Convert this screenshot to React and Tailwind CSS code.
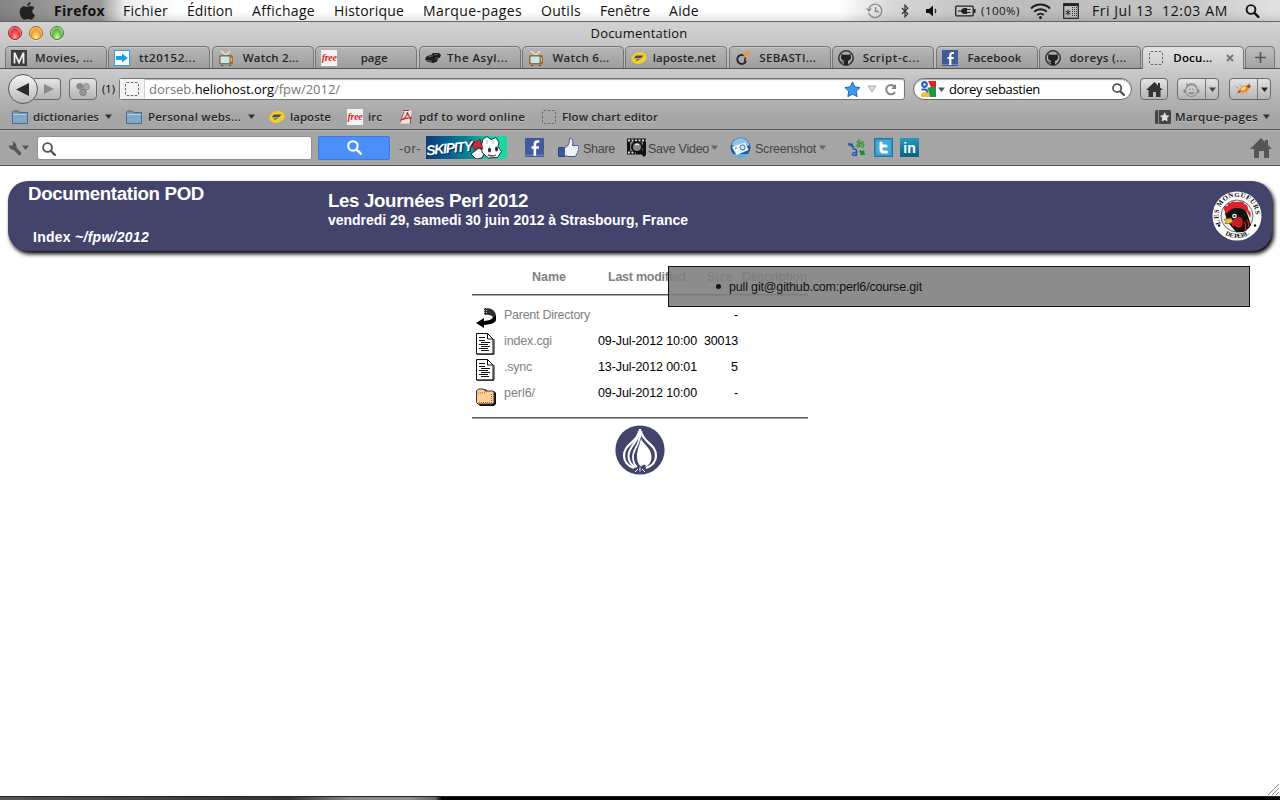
import React, { useLayoutEffect, useRef, useState } from "react";

/* One-line label whose letter spacing adapts to the width of its box. */
function Fit({ children, className = "" }) {
  const outer = useRef(null);
  const inner = useRef(null);
  const [spacing, setSpacing] = useState(0);
  useLayoutEffect(() => {
    const count = inner.current.textContent.length;
    const natural = inner.current.getBoundingClientRect().width;
    setSpacing((outer.current.clientWidth - natural) / count);
  }, []);
  return (
    <span ref={outer} className={"block shrink-0 whitespace-nowrap " + className}>
      <span ref={inner} style={{ letterSpacing: spacing + "px" }}>
        {children}
      </span>
    </span>
  );
}

function Svg({ className = "", box = "0 0 16 16", children }) {
  return (
    <svg className={"block shrink-0 " + className} viewBox={box} fill="none">
      {children}
    </svg>
  );
}

const Arrow = ({ className = "" }) => (
  <Svg className={"h-[5px] w-[7px] " + className} box="0 0 7 5">
    <path d="M0 .5h7L3.5 5z" fill="currentColor" />
  </Svg>
);

const Magnifier = ({ className = "" }) => (
  <Svg className={className} box="0 0 14 14">
    <circle cx="5.5" cy="5.5" r="4.4" stroke="currentColor" strokeWidth="1.9" />
    <path d="M9 9l3.800 3.800" stroke="currentColor" strokeWidth="2.4" strokeLinecap="round" />
  </Svg>
);

const Blank = ({ className = "" }) => (
  <Svg className={"h-4 w-4 " + className}>
    <rect x="1.5" y="1.5" width="13" height="13" rx="1.5" stroke="#666" strokeDasharray="2.4 1.6" />
  </Svg>
);

const MIcon = () => (
  <Svg className="h-4 w-4">
    <rect width="16" height="16" fill="#3c3c3c" />
    <path d="M3.500 13.500v-11M12.500 13.500v-11M3.500 2.500l4.500 10 4.500-10" stroke="#eee" strokeWidth="1.800" />
  </Svg>
);
const BlueArrow = () => (
  <Svg className="h-4 w-4">
    <rect x=".5" y=".5" width="15" height="15" fill="#fff" stroke="#2b9fdf" />
    <path d="M2 6h6V3.500L14 8l-6 4.500V10H2z" fill="#1f9be0" />
  </Svg>
);
const Tv = () => (
  <Svg className="h-4 w-4">
    <path d="M3 1l5 4 4-4" stroke="#f1e6cc" strokeWidth="1.2" />
    <rect x="1" y="5" width="14" height="9.500" rx="1.500" fill="#a56a32" />
    <rect x="2.500" y="6.500" width="9" height="6.500" rx="1" fill="#b9ecf7" />
    <path d="M13.300 7.500v4" stroke="#e8c98c" />
    <path d="M3 15.500h2M11 15.500h2" stroke="#68401d" />
  </Svg>
);
const Free = () => (
  <span className="flex h-4 w-4 shrink-0 items-center justify-center overflow-hidden bg-[#f3f3f3] font-['Liberation_Serif',serif] text-[10px] italic leading-none tracking-[-0.3px] text-[#d22]">
    free
  </span>
);
const Car = () => (
  <Svg className="h-4 w-4">
    <path d="M0 9l2-3 4-1 2-2 6 0 2 2-1 2.500-2 1-1 3-4 1.500-6-1.500z" fill="#1d1d1d" />
    <path d="M3 7l5-1.300M9 5l4-.8M2 10.500l5 .8M10 9l3-1.500" stroke="#777" strokeWidth=".8" />
  </Svg>
);
const Poste = () => (
  <Svg className="h-4 w-4">
    <ellipse cx="8" cy="8" rx="7.800" ry="5.800" transform="rotate(-12 8 8)" fill="#f6cd24" />
    <path d="M5 5.500h7.500L10 8.200H2.800zM5.500 9.200h4L5 11z" fill="#30517c" />
  </Svg>
);
const Swirl = () => (
  <Svg className="h-4 w-4">
    <path d="M9 5.500A4.500 4.500 0 1 0 11 11" stroke="#2a2a2a" strokeWidth="2" />
    <path d="M9.500 11.500l1-4" stroke="#2a2a2a" strokeWidth="1.500" />
    <path d="M8 4c2-.5 3-3 4-4l3 2c-1 3-3 4.500-5.500 5z" fill="#f0963a" />
  </Svg>
);
const Github = () => (
  <Svg className="h-4 w-4">
    <circle cx="8" cy="8" r="7.200" fill="#aaa" stroke="#333" strokeWidth="1.500" />
    <path d="M3.500 4l2 .8h5l2-.8.5 3.500c0 2-1.500 3-3 3.300V15H6v-4.200C4.500 10.500 3 9.500 3 7.500z" fill="#222" />
    <path d="M3.500 11.500l2.500 1.300" stroke="#333" />
  </Svg>
);
const Fb = ({ className = "h-4 w-4" }) => (
  <Svg className={className}>
    <rect width="16" height="16" fill="#3f5b9c" />
    <path d="M0 14.500h16" stroke="#6d86bd" />
    <path d="M12 3h-1.500C9 3 8.300 4 8.300 5.500V15M5.500 8h6.200" stroke="#fff" strokeWidth="2.200" />
  </Svg>
);
const Folder = () => (
  <Svg className="h-4 w-4">
    <path d="M.5 3.500l1-1.500h5l1 1.500h8v11H.5z" fill="#7399bb" stroke="#466d92" />
    <path d="M1 6h14v8H1z" fill="#83a9c9" />
    <path d="M1 5.500h14" stroke="#b4cde1" />
  </Svg>
);
const Pdf = () => (
  <Svg className="h-4 w-4">
    <path d="M5 1.500h9L11.500 14.500H2L5 1.500z" fill="#eee3e1" />
    <path d="M2 13.500L6 2.500M5 1.500h6M12.500 9v5.500" stroke="#a8433f" />
    <path d="M3 11c3-1 6-4 6.500-8 .5 3 2 5.500 4.500 6-3-.5-7 .5-11 2z" stroke="#b9322d" strokeWidth="1.200" />
  </Svg>
);

const tabs = [
  [MIcon, "Movies, ...", "w-[58px]"],
  [BlueArrow, "tt20152...", "w-[57px]"],
  [Tv, "Watch 2...", "w-[56px]"],
  [Free, "page", "w-[27px]"],
  [Car, "The Asyl...", "w-[61px]"],
  [Tv, "Watch 6...", "w-[57px]"],
  [Poste, "laposte.net", "w-[63px]"],
  [Swirl, "SEBASTI...", "w-[57px]"],
  [Github, "Script-c...", "w-[57px]"],
  [Fb, "Facebook", "w-[54px]"],
  [Github, "doreys (...", "w-[57px]"],
];

const menus = [
  ["Fichier", "w-[45px]"],
  ["Édition", "w-[46px]"],
  ["Affichage", "w-[63px]"],
  ["Historique", "w-[70px]"],
  ["Marque-pages", "w-[99px]"],
  ["Outils", "w-[40px]"],
  ["Fenêtre", "w-[50px]"],
  ["Aide", "w-[30px]"],
];

function MenuBar() {
  return (
    <div className="flex h-[21px] items-center bg-[linear-gradient(90deg,#848484_0,#969696_50px,#999_100px,#eee_125px,#fff_180px,#fff_840px,#d8d8d8_890px,#bcbcbc_1000px,#c4c4c4_1180px,#e2e2e2_1280px)] text-[14px] leading-[20px] text-[#111] shadow-[inset_0_-8px_8px_-5px_rgba(0,0,0,0.14)]">
      <Svg className="ml-[19px] h-[18px] w-[17px]" box="0 0 17 18">
        <path d="M11.500 0c.2 2-1.500 4-3.300 4C8 2.200 9.700.4 11.500 0zM8.300 5c.8 0 1.800-1 3.600-.9 1.500.1 2.700.7 3.500 1.900-3 1.700-2.500 5.700.6 7-.7 2-2.200 4.700-3.900 4.700-1.200 0-1.700-.7-3.200-.7s-2 .7-3.200.7C3.200 17.700.7 13.500.7 10c0-3.800 2.400-5.800 4.500-5.800C6.500 4.200 7.500 5 8.300 5z" fill="#222" />
      </Svg>
      <Fit className="ml-[18px] mr-[18px] w-[51px] font-bold">Firefox</Fit>
      <div className="flex gap-[19px]">
        {menus.map(([t, w]) => (
          <Fit key={t} className={w}>{t}</Fit>
        ))}
      </div>
      <div className="ml-auto flex items-center pr-[20px]">
        <Svg className="h-[16px] w-[18px] text-[#888]" box="0 0 18 16">
          <path d="M3 5a6.700 6.700 0 1 1-.3 5M9.500 4v4.500h3.500" stroke="currentColor" strokeWidth="1.400" />
          <path d="M0 5.500h6L3 9z" fill="currentColor" />
        </Svg>
        <Svg className="ml-[17px] h-[14px] w-[8px]" box="0 0 8 14">
          <path d="M.8 4l6 5.800L4 12.800V1.200l2.800 3L.8 10" stroke="#333" strokeWidth="1.200" />
        </Svg>
        <Svg className="ml-[17px] h-[12px] w-[12px]" box="0 0 12 12">
          <path d="M0 4h3l4-3.500v11L3 8H0z" fill="#111" />
          <path d="M9 4q1.500 2 0 4" stroke="#222" strokeWidth="1.300" />
        </Svg>
        <Svg className="ml-[17px] h-[12px] w-[21px]" box="0 0 21 12">
          <rect x=".7" y="1.200" width="17.500" height="9.600" rx="1" stroke="#222" strokeWidth="1.300" />
          <path d="M19 4h1.500v4H19z" fill="#222" />
          <path d="M3 6h4M12 4.500h3.500M12 7.500h3.500" stroke="#222" strokeWidth="1.200" />
          <path d="M6 6c0-2 2-3 3.500-3H12v6H9.500C8 9 6 8 6 6z" fill="#222" />
        </Svg>
        <Fit className="ml-[5px] w-[39px] text-[11.500px]">(100%)</Fit>
        <Svg className="ml-[10px] h-[16px] w-[21px]" box="0 0 21 16">
          <path d="M1 5.500a13.500 13.500 0 0 1 19 0M4.200 8.800a9 9 0 0 1 12.600 0M7.300 12a4.700 4.700 0 0 1 6.400 0" stroke="#1c1c1c" strokeWidth="2" />
          <circle cx="10.500" cy="14.500" r="1.500" fill="#1c1c1c" />
        </Svg>
        <Svg className="ml-[12px] h-[16px] w-[16px]">
          <rect x=".7" y=".7" width="14.600" height="14.600" stroke="#222" strokeWidth="1.200" />
          <path d="M1 2h14" stroke="#222" strokeWidth="2" />
          <path d="M5 6.500v6M2.500 8l5 3M7.500 8l-5 3" stroke="#222" />
          <path d="M9.500 4v10M11.500 4v10M13.500 4v10" stroke="#333" strokeDasharray="1 1" />
        </Svg>
        <Fit className="ml-[13px] w-[61px]">Fri Jul 13</Fit>
        <Fit className="ml-[9px] w-[66px]">12:03 AM</Fit>
        <Magnifier className="ml-[17px] h-[14px] w-[15px]" />
      </div>
    </div>
  );
}

function TitleBar() {
  const light = "h-[14px] w-[14px] rounded-full border shadow-[0_1px_0_rgba(255,255,255,0.4)]";
  return (
    <div className="flex h-[24px] items-center rounded-t-[5px] px-[8px]">
      <div className="flex w-[60px] shrink-0 gap-[7px] pb-[2px]">
        <span className={light + " border-[#8e2b2b] bg-[radial-gradient(ellipse_at_50%_90%,#ff9a98_5%,#e8303c_55%,#f3b4b4_85%)]"} />
        <span className={light + " border-[#a5672a] bg-[radial-gradient(ellipse_at_50%_90%,#ffe883_5%,#f09a2c_55%,#f9dcb0_85%)]"} />
        <span className={light + " border-[#3f7f31] bg-[radial-gradient(ellipse_at_50%_90%,#cdf59a_5%,#5fb142_55%,#cde9bd_85%)]"} />
      </div>
      <div className="flex flex-1 justify-center pb-[2px] pr-[62px]">
        <Fit className="w-[97px] text-[13px] leading-[18px] text-[#111]">Documentation</Fit>
      </div>
    </div>
  );
}

function Tabs() {
  return (
    <div className="flex h-[23px] items-end border-b border-[#555] pl-[5px] text-[11.500px] font-[650] leading-[16px] text-[#262626]">
      {tabs.map(([Icon, label, w], i) => (
        <div key={i} className="mr-[1.400px] flex h-[22px] w-[102px] shrink-0 items-center rounded-t-[5px] border border-b-0 border-[#747474] bg-linear-to-b from-[#b6b6b6] to-[#9e9e9e] pl-[5px] pr-[4px] shadow-[inset_0_1px_0_#c6c6c6]">
          <Icon />
          <div className="-ml-px flex flex-1 justify-center">
            <Fit className={w}>{label}</Fit>
          </div>
        </div>
      ))}
      <div className="-mb-px flex h-[23px] w-[102px] shrink-0 items-center rounded-t-[5px] border border-b-0 border-[#777] bg-linear-to-b from-[#e2e2e2] to-[#cbcbcb] pl-[5px] text-black">
        <Blank />
        <Fit className="ml-[9px] w-[39px]">Docu...</Fit>
        <Svg className="ml-[14px] h-[8px] w-[8px]" box="0 0 8 8">
          <path d="M1 1l6 6M7 1L1 7" stroke="#777" strokeWidth="2" />
        </Svg>
      </div>
      <div className="ml-[1px] flex h-[22px] w-[30px] shrink-0 items-center justify-center rounded-t-[5px] border border-b-0 border-[#777] bg-linear-to-b from-[#bebebe] to-[#a3a3a3]">
        <Svg className="h-[11px] w-[11px]" box="0 0 11 11">
          <path d="M5.500 0v11M0 5.500h11" stroke="#555" strokeWidth="1.600" />
        </Svg>
      </div>
    </div>
  );
}

const button = "flex h-[22px] shrink-0 items-center justify-center rounded-[4px] border border-[#6a6a6a] bg-linear-to-b from-[#e4e4e4] to-[#b4b4b4]";

function NavBar() {
  return (
    <div className="flex h-[40px] items-center pl-[8px] text-black">
      <div className="z-10 flex h-[30px] w-[30px] shrink-0 items-center justify-center rounded-full border border-[#555] bg-linear-to-b from-[#f4f4f4] to-[#b9b9b9]">
        <Svg className="mr-[2px] h-[13px] w-[13px]" box="0 0 13 13">
          <path d="M13 0v13L0 6.500z" fill="#2b2b2b" />
        </Svg>
      </div>
      <div className={button + " -ml-[4px] w-[27px] rounded-l-none border-l-0 pl-[3px]"}>
        <Svg className="h-[10px] w-[10px]" box="0 0 10 10">
          <path d="M0 0v10l10-5z" fill="#8b8b8b" />
        </Svg>
      </div>
      <div className={button + " ml-[8px] w-[28px]"}>
        <Svg className="h-[15px] w-[16px]">
          <circle cx="4.500" cy="4.500" r="3.500" fill="#898989" />
          <circle cx="11.500" cy="5" r="3.300" fill="#aaa" stroke="#858585" />
          <circle cx="8" cy="11" r="3.500" fill="#999" stroke="#7c7c7c" />
        </Svg>
      </div>
      <Fit className="ml-[5px] w-[13px] text-[11px] leading-[16px]">(1)</Fit>
      <div className="ml-[4px] flex h-[22px] w-[786px] shrink-0 items-center rounded-[3px] border border-[#757575] bg-white shadow-[inset_0_1px_1px_#aaa]">
        <div className="flex h-full w-[25px] items-center border-r border-[#d0d0d0] bg-[#f3f3f3] pl-[4px]">
          <Blank />
        </div>
        <Fit className="ml-[4px] w-[191px] text-[13px] leading-[18px] text-[#777]">
          dorseb.<span className="text-black">heliohost.org</span>/fpw/2012/
        </Fit>
        <div className="ml-auto flex items-center pr-[7px]">
          <Svg className="h-[17px] w-[17px]" box="0 0 17 17">
            <path d="M8.500 1l2.300 4.900 5.200.7-3.800 3.700.9 5.300-4.600-2.500-4.600 2.500.9-5.300L1 6.600l5.200-.7z" fill="#3f9bf0" stroke="#1b60b0" />
          </Svg>
          <Svg className="ml-[6px] h-[8px] w-[10px]" box="0 0 10 8">
            <path d="M1 1h8L5 7z" fill="#ddd" stroke="#aaa" />
          </Svg>
          <Svg className="ml-[7px] h-[13px] w-[13px]" box="0 0 13 13">
            <path d="M10.500 3.500A4.700 4.700 0 1 0 11 9" stroke="#858585" strokeWidth="2" />
            <path d="M7 6h5V1z" fill="#858585" />
          </Svg>
        </div>
      </div>
      <div className="ml-[8px] flex h-[22px] w-[219px] shrink-0 items-center rounded-full border border-[#6b6b6b] bg-white pl-[6px] shadow-[inset_0_1px_1px_#aaa]">
        <Svg className="h-4 w-4">
          <path d="M0 0h16v16H0z" fill="#fff" />
          <path d="M8 0h8v6h-5z" fill="#e81f26" />
          <path d="M10 6h6v10h-6l-2-4z" fill="#19984b" />
          <circle cx="4.500" cy="3.500" r="2.300" stroke="#2458d8" strokeWidth="2.200" />
          <path d="M1 16v-3l3-2h5l1 5z" fill="#f4bf2a" />
          <path d="M1.500 8.500h4l2.500 2.500" stroke="#2458d8" strokeWidth="1.800" />
          <path d="M7.500 6.500h3v3h-3z" fill="#19984b" />
        </Svg>
        <Arrow className="ml-[2px] text-[#555]" />
        <Fit className="ml-[4px] w-[91px] text-[13px] leading-[18px]">dorey sebastien</Fit>
        <Magnifier className="ml-auto mr-[6px] h-[13px] w-[13px] text-[#555]" />
      </div>
      <div className={button + " ml-[8px] w-[28px]"}>
        <Svg className="h-[15px] w-[17px]" box="0 0 17 15">
          <path d="M8.500 0L12 3.500V1h2v4.500L17 8h-2.500v7H10v-5H7v5H2.500V8H0z" fill="#333" />
        </Svg>
      </div>
      <div className={button + " ml-[9px] w-[42px]"}>
        <Svg className="ml-[5px] h-[17px] w-[17px]">
          <circle cx="8" cy="9" r="5.500" fill="#ccc" stroke="#888" />
          <path d="M3 6c2-4 8-5 10 0M4.500 5L3 2M5.500 11q2.500 3 5 0zM6.500 7v2M9.500 7v2" stroke="#888" />
          <path d="M1.500 8v3M14.500 8v3" stroke="#888" strokeWidth="2" />
        </Svg>
        <span className="ml-auto flex h-full w-[13px] items-center justify-center border-l border-[#777]"><Arrow className="h-[4px] w-[6px] text-[#444]" /></span>
      </div>
      <div className={button + " ml-[10px] w-[42px]"}>
        <Svg className="ml-[5px] h-[17px] w-[17px]">
          <path d="M0 5l4 2M1 12l4-2M7 13l1-3M11 12l-1-3M14 2l-2 2M4 3l3 3" stroke="#b59a74" strokeWidth=".8" />
          <ellipse cx="9" cy="7.500" rx="5" ry="2.900" transform="rotate(-25 9 7.500)" fill="#ee8b20" />
          <ellipse cx="8" cy="7" rx="2.500" ry="1.300" transform="rotate(-25 8 7)" fill="#ffe292" />
          <circle cx="13" cy="5" r="1.600" fill="#ae3e18" />
          <circle cx="4" cy="10" r="1.300" fill="#b5552a" />
        </Svg>
        <span className="ml-auto flex h-full w-[13px] items-center justify-center border-l border-[#777]"><Arrow className="h-[4px] w-[6px] text-[#222]" /></span>
      </div>
    </div>
  );
}

function Bookmarks() {
  return (
    <div className="flex h-[21px] items-center border-b border-[#555] pb-[5px] pl-[12px] text-[11.500px] font-[650] leading-[16px] text-[#252525] [text-shadow:0_1px_0_rgba(255,255,255,0.3)]">
      <Folder />
      <Fit className="ml-[5px] w-[66px]">dictionaries</Fit>
      <Arrow className="ml-[6px] text-[#333]" />
      <div className="ml-[14px]"><Folder /></div>
      <Fit className="ml-[6px] w-[93px]">Personal webs...</Fit>
      <Arrow className="ml-[7px] text-[#333]" />
      <div className="ml-[14px]"><Poste /></div>
      <Fit className="ml-[5px] w-[41px]">laposte</Fit>
      <div className="ml-[16px]"><Free /></div>
      <Fit className="ml-[5px] w-[14px]">irc</Fit>
      <div className="ml-[16px]"><Pdf /></div>
      <Fit className="ml-[5px] w-[106px]">pdf to word online</Fit>
      <Blank className="ml-[16px]" />
      <Fit className="ml-[5px] w-[96px]">Flow chart editor</Fit>
      <Svg className="ml-auto h-[14px] w-[16px]" box="0 0 16 14">
        <rect width="16" height="14" rx="1.500" fill="#444" />
        <path d="M3.500 0v14" stroke="#888" />
        <path d="M9.700 2l1.500 3.200 3.400.5-2.500 2.400.6 3.500-3-1.600-3 1.600.6-3.500-2.500-2.400 3.400-.5z" fill="#ddd" />
      </Svg>
      <Fit className="ml-[4px] w-[83px]">Marque-pages</Fit>
      <Arrow className="ml-[5px] mr-[10px] text-[#333]" />
    </div>
  );
}

function SearchToolbar() {
  return (
    <div className="flex h-[36px] shrink-0 items-center border-b border-[#555] bg-[#a5a5a5] pl-[8px] font-['Liberation_Sans',Arial,sans-serif] text-[12.500px] leading-[16px] text-[#444] shadow-[inset_0_1px_0_#b5b5b5]">
      <Svg className="h-[16px] w-[14px]" box="0 0 14 16">
        <path d="M5 6.500l6.500 7" stroke="#555" strokeWidth="3.400" strokeLinecap="round" />
        <path d="M4 1.500l1.500 2.500L3.500 6 .8 5A4.300 4.300 0 0 0 7.500 9 4.600 4.600 0 0 0 4 1.500z" fill="#555" />
      </Svg>
      <Arrow className="text-[#555]" />
      <div className="ml-[8px] flex h-[24px] w-[275px] shrink-0 items-center rounded-[3px] border border-[#929292] bg-white pl-[4px] pt-[2px]">
        <Magnifier className="h-[14px] w-[14px] text-[#555]" />
      </div>
      <div className="ml-[6px] flex h-[24px] w-[72px] shrink-0 items-center justify-center rounded-[2px] border border-[#3e7ae6] bg-[#4b8ff9] text-white">
        <Magnifier className="h-[15px] w-[15px]" />
      </div>
      <Fit className="ml-[9px] w-[22px] pt-[2px]">-or-</Fit>
      <div className="ml-[5px] flex h-[23px] w-[81px] shrink-0 items-center bg-linear-to-r from-[#0b3a80] via-[#0b8094] to-[#18d9a2] to-80%">
        <span className="-rotate-6 font-['Liberation_Sans',Arial,sans-serif] text-[14px] font-bold italic leading-none tracking-[-1.2px] text-white [text-shadow:1px_1px_0_#062452]">SKIPITY</span>
        <Svg className="-ml-[2px] h-[23px] w-[32px]" box="0 0 32 23">
          <path d="M1 18l8-6 6 4-3 6-6 1z" fill="#fff" stroke="#16304b" />
          <path d="M11 11L13 3l4-2.500 4 3 5-2 3 5-1 4 3.500 5-4 6-9 .5-6-5z" fill="#fff" stroke="#16304b" />
          <path d="M0 4l6 2 4-3 3 10-5-2-3 3z" fill="#d22a36" stroke="#5d1020" strokeWidth=".7" />
          <ellipse cx="19.500" cy="14" rx="1.500" ry="2.500" fill="#172d49" />
          <ellipse cx="26.500" cy="13" rx="1.500" ry="2.500" fill="#172d49" />
          <path d="M18 19q5 2 8 0" stroke="#b52c35" strokeWidth="1.500" />
          <path d="M17 4v4M23 5v3" stroke="#9db4c6" />
        </Svg>
      </div>
      <Fb className="ml-[18px] h-[19px] w-[19px]" />
      <Svg className="ml-[14px] h-[19px] w-[21px]" box="0 0 21 19">
        <path d="M.5 9.500h6v9h-6z" fill="#3b57a0" stroke="#2e4684" />
        <path d="M6.500 10c3-1 5-4 5-9.500 3-.5 4 2 3 7h5c1.500 1 1.500 2 .8 3 .6 1 .4 2-.6 3 0 1.200-.3 2-1.200 2.500 0 1.500-.5 2.500-2.500 2.500h-6l-3.500-1z" fill="#edf1fa" stroke="#42599b" />
      </Svg>
      <Fit className="ml-[4px] w-[32px] pt-[2px]">Share</Fit>
      <Svg className="ml-[12px] h-[19px] w-[20px]" box="0 0 20 19">
        <path d="M0 .500h19v16H0z" fill="#111" />
        <path d="M1 2.500h18M1 14.500h8" stroke="#ddd" strokeWidth="2" strokeDasharray="2 1.500" />
        <path d="M3 4h13v9H3z" fill="#777" />
        <circle cx="10" cy="9" r="5" fill="#888" stroke="#111" strokeWidth="2" />
        <path d="M8 7q2-2 4 0" stroke="#fff" />
        <path d="M13 12l5 6" stroke="#111" strokeWidth="3" />
      </Svg>
      <Fit className="ml-[1px] w-[61px] pt-[2px]">Save Video</Fit>
      <Arrow className="ml-[2px] text-[#666]" />
      <Svg className="ml-[12px] h-[21px] w-[21px]" box="0 0 21 21">
        <circle cx="10.500" cy="10.500" r="10" fill="#1d5fa3" />
        <path d="M1.500 8a9.300 9.300 0 0 1 18 0q-8 5-18 0z" fill="#8cc3ea" />
        <path d="M2 17h17q-4 4-8.500 4T2 17z" fill="#5fb0e2" />
        <path d="M2 10L15 5.500l3.500 7.500-12 5z" fill="#f3f8fc" />
        <circle cx="12.500" cy="10.500" r="2.600" fill="#cfe0ec" stroke="#336a96" />
        <path d="M5 11.500l2-.7" stroke="#37769d" />
      </Svg>
      <Fit className="ml-[4px] w-[61px] pt-[2px]">Screenshot</Fit>
      <Arrow className="ml-[3px] text-[#666]" />
      <Svg className="ml-[22px] h-[18px] w-[18px]" box="0 0 18 18">
        <path d="M5 10.500q3.500-1.500 3.500 1.500v5M8.500 13.500c-5-.5-5 3-2.500 3l2.500-1" stroke="#245bb8" strokeWidth="1.500" />
        <path d="M0 4l5 .5V7h2L4 10V8L0 6z" fill="#245bb8" />
        <path d="M8 3h8M11 0q-1 4 1 7.500M15 4c-1 3-5 5-6 3 0-3 7-4 7-.5 0 1.500-1 2-2 2.500" stroke="#2a9b39" strokeWidth="1.200" />
        <path d="M17 16l-1-5-1.500 1.300-2-1.300-1.500 2 2 1.500L12 16z" fill="#188b2a" />
      </Svg>
      <Svg className="ml-[8px] h-[19px] w-[19px]" box="0 0 19 19">
        <rect x=".5" y=".5" width="18" height="18" fill="#2f8fc0" stroke="#2575a3" />
        <rect x="2" y="2" width="15" height="15" rx="2" fill="#43a9d6" />
        <path d="M7 5v6.500q0 2.500 2.500 2.500h3M7 8h5" stroke="#fff" strokeWidth="3" strokeLinecap="round" strokeLinejoin="round" />
      </Svg>
      <div className="ml-[7px] flex h-[19px] w-[19px] shrink-0 items-center justify-center bg-linear-to-b from-[#2799bd] to-[#066282] text-[14px] font-bold leading-none text-white">in</div>
      <Svg className="ml-auto mr-[8px] h-[20px] w-[22px]" box="0 0 22 20">
        <path d="M11 0l4 4V2h3v5l4 4h-3v9h-5v-7H9v7H4v-9H0z" fill="#555" />
      </Svg>
    </div>
  );
}

const Parent = () => (
  <Svg className="h-[22px] w-[20px]" box="0 0 20 22">
    <path d="M8 1q11-1 12 8l-3 1q-3-3-9-2z" fill="#303030" />
    <path d="M20 8.500v5q-2 4-12 4.500v3l-8-5 8-5v3q8-.5 9-4z" fill="#000" />
    <path d="M8.500 1v7M10.500 1v6" stroke="#aaa" strokeDasharray="1 1" />
  </Svg>
);
const Page = () => (
  <Svg className="h-[22px] w-[20px]" box="0 0 20 22">
    <path d="M.5.500h11l5.500 5.500v15H.5z" fill="#fff" stroke="#111" />
    <path d="M11.500.5v5.500h5.500M1 21.200h17V6" stroke="#111" />
    <path d="M3 4.500h6M3 7.500h6M5 9.500h9M3 11.500h9M5 13.500h9M3 15.500h9M5 17.500h8" stroke="#111" />
  </Svg>
);
const DirIcon = () => (
  <Svg className="h-[22px] w-[20px]" box="0 0 20 22">
    <path d="M1 5l2-2h5l2 2h7l2 2v11l-2 2H3l-2-2z" fill="#111" transform="translate(1 1)" />
    <path d="M.5 6l2-2h5l2 2h7.500l1 1v10.500l-1.500 1.500H2l-1.500-1.500z" fill="#ffcc99" stroke="#333" />
    <path d="M2 8h6l2-1.500M3 17.500h13M15.500 9v8" stroke="#a3622c" strokeDasharray="1 1" />
  </Svg>
);

const rows = [
  [Parent, "Parent Directory", "w-[86px]", "", "-", "w-[4px]"],
  [Page, "index.cgi", "w-[48px]", "09-Jul-2012 10:00", "30013", "w-[34px]"],
  [Page, ".sync", "w-[28px]", "13-Jul-2012 00:01", "5", "w-[7px]"],
  [DirIcon, "perl6/", "w-[31px]", "09-Jul-2012 10:00", "-", "w-[4px]"],
];

function Listing() {
  return (
    <section className="ml-[472px] mt-[17px] w-[336px] text-[12.500px] leading-[16px] text-black">
      <div className="flex h-[27px] border-b border-[#555] pl-[60px] pt-[1px] font-bold text-[#808080] shadow-[0_1px_0_#a8a8a8]">
        <Fit className="w-[34px]">Name</Fit>
        <Fit className="ml-[42px] w-[78px]">Last modified</Fit>
        <Fit className="ml-[21px] w-[25px]">Size</Fit>
        <Fit className="ml-[10px] w-[65px]">Description</Fit>
      </div>
      <div className="border-b border-[#555] pb-[6px] pt-[12px] shadow-[0_1px_0_#a8a8a8]">
        {rows.map(([Icon, name, w, date, size, sw], i) => (
          <div key={i} className="flex h-[26px] pl-[4px]">
            <div className="w-[28px] shrink-0"><Icon /></div>
            <div className="w-[94px] shrink-0 text-[#808080]"><Fit className={w}>{name}</Fit></div>
            <div className="w-[99px] shrink-0">{date && <Fit className="w-[99px]">{date}</Fit>}</div>
            <div className="flex w-[41px] shrink-0 justify-end"><Fit className={sw}>{size}</Fit></div>
          </div>
        ))}
      </div>
      <Svg className="ml-[143px] mt-[7px] h-[50px] w-[50px]" box="0 0 50 50">
        <circle cx="25" cy="25" r="24.600" fill="#43446b" />
        <path d="M24 6C23 17 8.500 19 9 31c.3 6 4 10 10 12" stroke="#fff" strokeWidth="2.200" />
        <path d="M24.300 8C22 18 13.500 22 13.500 31c0 5 3 9 7 11.500" stroke="#fff" strokeWidth="2" />
        <path d="M24.600 12C24 21 18 24 18 32c0 4 1.500 8 4 10" stroke="#fff" strokeWidth="1.800" />
        <path d="M26 13c1 6 10.500 9 10.500 19 0 5-3 8.500-6.500 10.500 2-3 0-3-2-2.500l-2 1.500c-3-2-4-6-4-10C22 24 25 20 26 13z" fill="#fff" />
        <path d="M26 6c1 11 15.500 13 15 25-.3 6-4 10-10 12M25 4v9" stroke="#fff" strokeWidth="2.200" />
        <path d="M20 47l3-3M25 42.500v4M30 47l-3-3" stroke="#fff" />
      </Svg>
    </section>
  );
}

const Rooster = () => (
  <Svg className="h-[50px] w-[50px]" box="0 0 50 50">
    <defs>
      <path id="ring-top" d="M8.500 32.500A18.500 18.500 0 1 1 41.500 32.500" />
      <path id="ring-bottom" d="M9 40.500Q25 54 41 40.500" />
    </defs>
    <circle cx="25" cy="25" r="24.500" fill="#fff" />
    <circle cx="25" cy="25" r="16" fill="#eee" stroke="#333" strokeWidth=".7" />
    <text className="font-['Liberation_Serif',serif] text-[7px] font-bold" fill="#111">
      <textPath href="#ring-top" textLength="66">LES MONGUEURS</textPath>
    </text>
    <text className="font-['Liberation_Serif',serif] text-[6.500px] font-bold" fill="#111">
      <textPath href="#ring-bottom" startOffset="5" textLength="26">DE PERL</textPath>
    </text>
    <circle cx="7" cy="34.500" r="1.200" fill="#111" />
    <circle cx="43" cy="34.500" r="1.200" fill="#111" />
    <path d="M13 22q2-7 10-6 10-2 13 9l3 9q-5 9-15 7l-5-6-4-5z" fill="#111" />
    <path d="M12 19q-2-5 4-4-2-4 3-3 0-3 4-1l9-.5q-1 3 2 3 2 1 2 5 4 4 2 8-2-7-9-9-9-2-14 5z" fill="#d8262c" />
    <path d="M21 29q6-5 9-2 2 5-1 9-4 2-6-1-4 1-4-4z" fill="#c91c22" />
    <circle cx="22.500" cy="25" r="2.300" fill="#fff" />
    <circle cx="22.500" cy="25" r="1.100" fill="#111" />
    <path d="M19 27l-7 1.500 2 2-1 2q5 1 8-2z" fill="#eec12d" stroke="#7d4e0d" strokeWidth=".6" />
    <path d="M32 31q3 3 1 8M35 29q3 4 1 7" stroke="#c91c22" strokeWidth="1.300" />
  </Svg>
);

export default function App() {
  return (
    <div className="flex h-[800px] w-[1280px] flex-col overflow-hidden bg-white font-['Open_Sans','Noto_Sans',sans-serif]">
      <MenuBar />
      <div className="h-[109px] shrink-0 border-t border-[#666] bg-[linear-gradient(#d2d2d2_0,#b9b9b9_46px,#cbcbcb_47px,#a6a6a6_94px,#a6a6a6_100%)]">
        <TitleBar />
        <Tabs />
        <NavBar />
        <Bookmarks />
      </div>
      <SearchToolbar />
      <main className="relative flex-1 bg-white pt-[15px] font-['Liberation_Sans',Arial,sans-serif]">
        <header className="mx-[8px] flex h-[70px] rounded-[20px] bg-[#43446b] font-bold text-white shadow-[2px_3px_4px_#000]">
          <div className="w-[300px] shrink-0 pl-[20px]">
            <Fit className="mt-[2px] w-[176px] text-[18.700px] leading-[22px]">Documentation POD</Fit>
            <Fit className="ml-[5px] mt-[23px] w-[116px] text-[14px] leading-[18px]">Index <i>~/fpw/2012</i></Fit>
          </div>
          <div className="flex-1 pl-[20px] pt-[9px]">
            <Fit className="w-[200px] text-[18.700px] leading-[22px]">Les Journées Perl 2012</Fit>
            <Fit className="-mt-px w-[360px] text-[14px] leading-[18px]">vendredi 29, samedi 30 juin 2012 à Strasbourg, France</Fit>
          </div>
          <div className="mr-[10px] mt-[10px]"><Rooster /></div>
        </header>
        <Listing />
        <div className="absolute left-[668px] top-[100px] flex h-[41px] w-[582px] items-center border border-[#111] bg-[#808080]/90 pl-[47px] text-[12.500px] leading-[16px] text-[#111]">
          <span className="h-[5px] w-[5px] rounded-full bg-[#111]" />
          <Fit className="ml-[8px] w-[193px]">pull git@github.com:perl6/course.git</Fit>
        </div>
        <Svg className="absolute bottom-px right-px h-[11px] w-[11px]" box="0 0 11 11">
          <path d="M0 11L11 0M4 11l7-7M8 11l3-3" stroke="#888" />
        </Svg>
      </main>
      <div className="h-[4px] shrink-0 border-t border-[#222] bg-[linear-gradient(90deg,#555_0,#3c3c3c_200px,#333_290px,#888_350px,#909090_410px,#666_435px,#000_442px)] bg-[length:1280px_4px] [background-image:linear-gradient(90deg,#555_0,#3c3c3c_200px,#333_350px,#888_420px,#909090_500px,#666_535px,#000_542px)]" />
    </div>
  );
}
